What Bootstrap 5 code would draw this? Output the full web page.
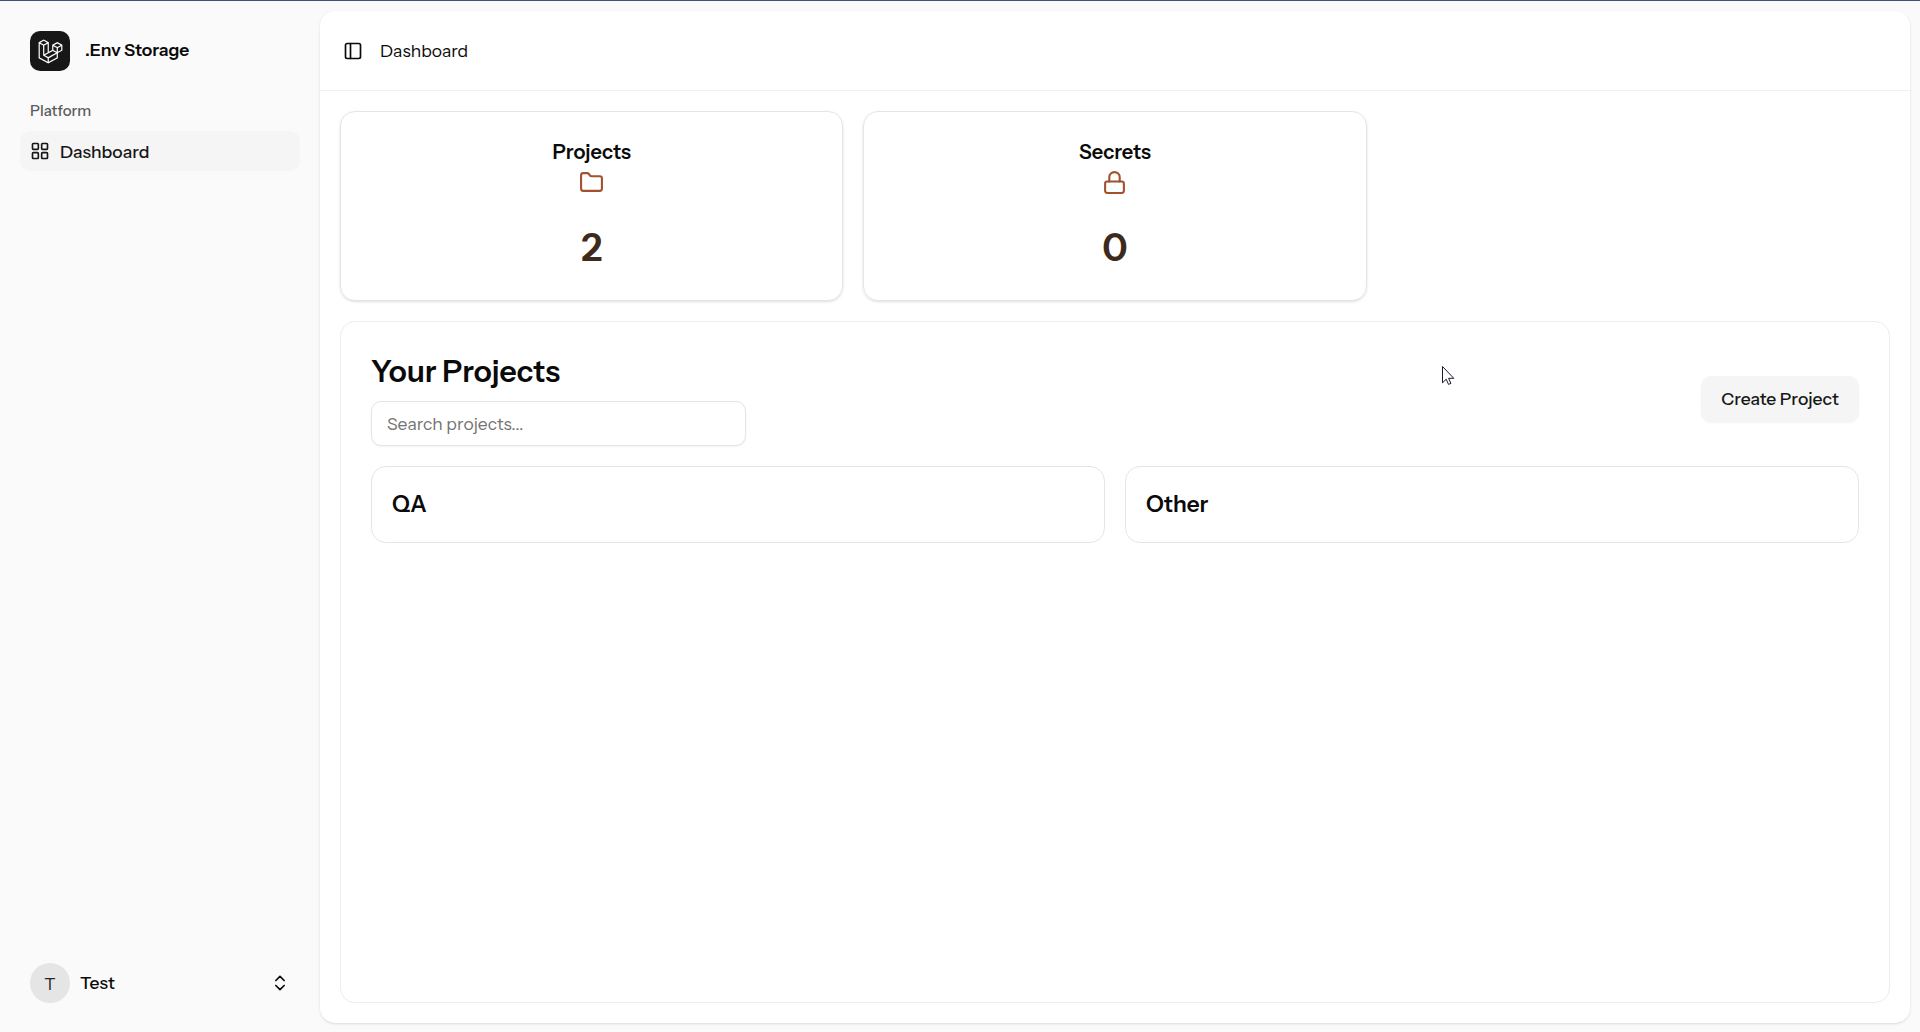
<!DOCTYPE html>
<html lang="en">
<head>
<meta charset="utf-8">
<meta name="viewport" content="width=device-width, initial-scale=1">
<title>Dashboard - .Env Storage</title>
<link href="https://cdn.jsdelivr.net/npm/bootstrap@5.3.0/dist/css/bootstrap.min.css" rel="stylesheet">
<style>
  body { font-family: "Instrument Sans", Inter, "Liberation Sans", sans-serif; font-size: 17.5px; line-height: 25px; color: #0a0a0a; background: #fafafa; border-top: 1px solid #3a5478; overflow: hidden; }
  svg { display: block; flex-shrink: 0; }
  .lucide { fill: none; stroke: currentColor; stroke-width: 2; stroke-linecap: round; stroke-linejoin: round; }
  .fw-md { font-weight: 500; }
  .app-side { width: 320px; padding: 30px 20px 29px; }
  .side-row { padding-left: 10px; padding-right: 10px; gap: 10px; }
  .brand-tile { width: 40px; height: 40px; border-radius: 10px; background: #171717; color: #fff; }
  .brand-name { margin-left: 5px; font-weight: 600; line-height: 24px; padding-bottom: 2px; }
  .side-label { font-size: 15px; line-height: 20px; font-weight: 500; color: #5c5c5c; margin-top: 30px; margin-bottom: 10px; }
  .side-link { height: 40px; border-radius: 10px; background: #f5f5f5; color: #171717; text-decoration: none; }
  .user-dot { width: 40px; height: 40px; background: #e5e5e5; color: #262626; }
  .user-name { padding-bottom: 2px; }
  .app-main { margin: 10px 10px 9px 0; border-radius: 15px; background: #fff; box-shadow: 0 1px 3px rgba(0,0,0,.1), 0 1px 2px -1px rgba(0,0,0,.1); min-width: 0; }
  .top-bar { height: 80px; padding: 0 23px; gap: 17px; border-bottom: 1px solid #f0f0f0; }
  .page-area { padding: 20px; gap: 20px; }
  .stat-grid { display: grid; grid-template-columns: repeat(3, 1fr); gap: 20px; }
  .stat-box { height: 190px; padding-top: 30px; border: 1px solid #e5e5e5; border-radius: 15px; box-shadow: 0 1px 3px rgba(0,0,0,.1), 0 1px 2px -1px rgba(0,0,0,.1); }
  .stat-title { font-size: 20px; line-height: 20px; font-weight: 600; margin-bottom: 7.5px; }
  .stat-icon { color: #a0522d; margin-bottom: 30px; }
  .stat-num { font-size: 37.5px; line-height: 45px; font-weight: 600; color: #3e2a1c; }
  .panel-box { border: 1px solid #ededed; border-radius: 15px; padding: 30px; }
  .panel-title { font-size: 30px; line-height: 40px; font-weight: 600; margin-bottom: 9px; }
  .search-box { width: 375px; height: 45px; font-size: 17.5px; padding: 0 15px; border: 1px solid #e5e5e5; border-radius: 10px; box-shadow: 0 1px 2px rgba(0,0,0,.05); }
  .search-box::placeholder { color: #737373; opacity: 1; }
  .btn-create { width: 158px; height: 46px; padding: 0; border: 0; font-size: 17.5px; font-weight: 500; border-radius: 10px; background: #f5f5f5; color: #171717; box-shadow: 0 1px 2px rgba(0,0,0,.05); }
  .project-grid { display: grid; grid-template-columns: 1fr 1fr; gap: 20px; margin-top: 20px; }
  .project-box { height: 77px; padding: 0 20px; border: 1px solid #e5e5e5; border-radius: 15px; font-size: 22.5px; font-weight: 600; }
  .pointer { position: absolute; left: 1442px; top: 366px; }
</style>
</head>
<body class="vh-100 d-flex">

<aside class="app-side d-flex flex-column flex-shrink-0">
  <div class="side-row d-flex align-items-center">
    <div class="brand-tile d-flex align-items-center justify-content-center">
      <svg width="25" height="25" viewBox="0 0 40 42" fill="currentColor"><path fill-rule="evenodd" clip-rule="evenodd" d="M17.2 5.633 8.6.855 0 5.633v26.51l16.2 9 16.2-9v-8.442l7.6-4.223V9.856l-8.6-4.777-8.6 4.777V18.3l-5.6 3.111V5.633ZM38 18.301l-5.6 3.11v-6.157l5.6-3.11V18.3Zm-1.06-7.856-5.54 3.078-5.54-3.079 5.54-3.078 5.54 3.079ZM24.8 18.3v-6.157l5.6 3.111v6.158L24.8 18.3Zm-1 1.732 5.54 3.078-13.14 7.302-5.54-3.078 13.14-7.3v-.002Zm-16.2 7.89 7.6 4.222V38.3L2 30.966V7.92l5.6 3.111v16.892ZM8.6 9.3 3.06 6.222 8.6 3.143l5.54 3.08L8.6 9.3Zm21.8 15.51-13.2 7.334V38.3l13.2-7.334v-6.156ZM9.6 11.034l5.6-3.11v14.6l-5.6 3.11v-14.6Z"/></svg>
    </div>
    <span class="brand-name">.Env Storage</span>
  </div>
  <div class="side-label side-row">Platform</div>
  <a href="#" class="side-link side-row d-flex align-items-center">
    <svg class="lucide" width="20" height="20" viewBox="0 0 24 24"><rect width="7" height="7" x="3" y="3" rx="1"/><rect width="7" height="7" x="14" y="3" rx="1"/><rect width="7" height="7" x="14" y="14" rx="1"/><rect width="7" height="7" x="3" y="14" rx="1"/></svg>
    <span class="fw-md">Dashboard</span>
  </a>
  <div class="side-row d-flex align-items-center mt-auto">
    <div class="user-dot rounded-circle d-flex align-items-center justify-content-center">T</div>
    <span class="user-name fw-md">Test</span>
    <svg class="lucide ms-auto" width="20" height="20" viewBox="0 0 24 24"><path d="m7 15 5 5 5-5"/><path d="m7 9 5-5 5 5"/></svg>
  </div>
</aside>

<main class="app-main flex-grow-1 d-flex flex-column">
  <header class="top-bar d-flex align-items-center">
    <svg class="lucide" width="20" height="20" viewBox="0 0 24 24"><rect width="18" height="18" x="3" y="3" rx="2"/><path d="M9 3v18"/></svg>
    <span>Dashboard</span>
  </header>
  <div class="page-area d-flex flex-column flex-grow-1">
    <div class="stat-grid">
      <section class="stat-box d-flex flex-column align-items-center">
        <div class="stat-title">Projects</div>
        <svg class="lucide stat-icon" width="25" height="25" viewBox="0 0 24 24"><path d="M20 20a2 2 0 0 0 2-2V8a2 2 0 0 0-2-2h-7.9a2 2 0 0 1-1.69-.9L9.6 3.9A2 2 0 0 0 7.93 3H4a2 2 0 0 0-2 2v13a2 2 0 0 0 2 2Z"/></svg>
        <div class="stat-num">2</div>
      </section>
      <section class="stat-box d-flex flex-column align-items-center">
        <div class="stat-title">Secrets</div>
        <svg class="lucide stat-icon" width="25" height="25" viewBox="0 0 24 24"><rect width="18" height="11" x="3" y="11" rx="2"/><path d="M7 11V7a5 5 0 0 1 10 0v4"/></svg>
        <div class="stat-num">0</div>
      </section>
    </div>
    <section class="panel-box flex-grow-1">
      <div class="d-flex align-items-center justify-content-between">
        <div>
          <h1 class="panel-title">Your Projects</h1>
          <input type="text" class="form-control search-box" placeholder="Search projects...">
        </div>
        <button type="button" class="btn btn-create">Create Project</button>
      </div>
      <div class="project-grid">
        <div class="project-box d-flex align-items-center"><span>QA</span></div>
        <div class="project-box d-flex align-items-center"><span>Other</span></div>
      </div>
    </section>
  </div>
</main>

<svg class="pointer" width="13" height="20" viewBox="0 0 13 20"><path d="M.5.5v16.300l3.700-3.600 2.300 5.200 2.400-1-2.300-5.100h5.200Z" fill="#fff" stroke="#1a1a2a" stroke-width="1"/></svg>
<script src="https://cdn.jsdelivr.net/npm/bootstrap@5.3.0/dist/js/bootstrap.bundle.min.js"></script>
</body>
</html>
